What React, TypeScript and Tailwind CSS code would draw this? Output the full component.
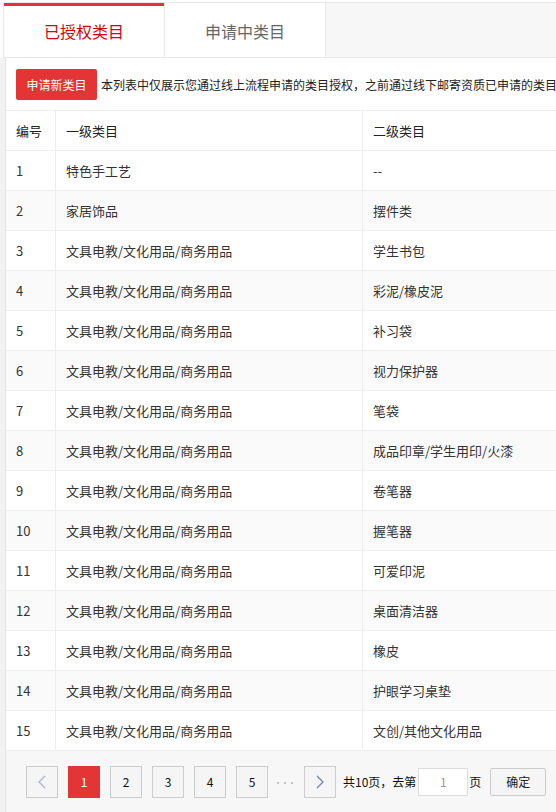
import React from "react";

const rows: [string, string][] = [
  ["特色手工艺", "--"],
  ["家居饰品", "摆件类"],
  ["文具电教/文化用品/商务用品", "学生书包"],
  ["文具电教/文化用品/商务用品", "彩泥/橡皮泥"],
  ["文具电教/文化用品/商务用品", "补习袋"],
  ["文具电教/文化用品/商务用品", "视力保护器"],
  ["文具电教/文化用品/商务用品", "笔袋"],
  ["文具电教/文化用品/商务用品", "成品印章/学生用印/火漆"],
  ["文具电教/文化用品/商务用品", "卷笔器"],
  ["文具电教/文化用品/商务用品", "握笔器"],
  ["文具电教/文化用品/商务用品", "可爱印泥"],
  ["文具电教/文化用品/商务用品", "桌面清洁器"],
  ["文具电教/文化用品/商务用品", "橡皮"],
  ["文具电教/文化用品/商务用品", "护眼学习桌垫"],
  ["文具电教/文化用品/商务用品", "文创/其他文化用品"],
];

function Chevron({ dir, color }: { dir: "left" | "right"; color: string }) {
  return (
    <svg width="8" height="14" viewBox="0 0 8 14" fill="none">
      {dir === "left" ? (
        <polyline points="7,1 1,7 7,13" stroke={color} strokeWidth="1.2" />
      ) : (
        <polyline points="1,1 7,7 1,13" stroke={color} strokeWidth="1.2" />
      )}
    </svg>
  );
}

export default function App() {
  return (
    <div className="h-[812px] w-[556px] overflow-hidden bg-white text-[13px] text-[#333] font-['Microsoft_YaHei','Noto_Sans_CJK_SC',sans-serif]">
      {/* Tabs */}
      <div className="pl-[3px] pt-[2px]">
        <div className="flex h-[56px] border-l border-t border-b border-[#e8e8e8] bg-[#f7f7f7]">
          <div className="flex w-[160px] items-center justify-center border-t-[3px] border-[#e33333] bg-white pb-[2px] text-[16px] text-[#d7000f]">
            已授权类目
          </div>
          <div className="flex w-[162px] items-center justify-center border-l border-r border-[#e8e8e8] bg-white pt-[1px] text-[16px] text-[#666]">
            申请中类目
          </div>
        </div>
      </div>

      {/* Body */}
      <div className="bg-[#f2f2f2] pl-[5px]">
        <div className="overflow-hidden border-l border-[#e4e4e4] bg-white">
          {/* Action row */}
          <div className="flex h-[53px] items-start overflow-hidden whitespace-nowrap border-b border-[#eeeeee] pl-[10px] pt-[11px]">
            <div className="flex h-[31px] w-[81px] shrink-0 items-center justify-center rounded-[2px] bg-[#e33535] text-[12px] text-white">
              申请新类目
            </div>
            <div className="ml-[4px] flex h-[31px] items-center text-[12px] text-[#222]">
              本列表中仅展示您通过线上流程申请的类目授权，之前通过线下邮寄资质已申请的类目
            </div>
          </div>

          {/* Header */}
          <div className="flex h-[40px] w-[700px] border-b border-[#eeeeee] text-[#222]">
            <div className="flex w-[50px] shrink-0 items-center border-r border-[#eeeeee] pl-[10px]">编号</div>
            <div className="flex w-[307px] shrink-0 items-center border-r border-[#eeeeee] pl-[10px]">一级类目</div>
            <div className="flex flex-1 items-center pl-[10px]">二级类目</div>
          </div>

          {/* Rows */}
          {rows.map(([a, b], i) => (
            <div
              key={i}
              className={`flex h-[40px] w-[700px] border-b border-[#eeeeee] ${i % 2 === 1 ? "bg-[#fafafa]" : "bg-white"}`}
            >
              <div className="flex w-[50px] shrink-0 items-center border-r border-[#eeeeee] pl-[10px]">{i + 1}</div>
              <div className="flex w-[307px] shrink-0 items-center border-r border-[#eeeeee] pl-[10px]">{a}</div>
              <div className="flex flex-1 items-center pl-[10px]">{b}</div>
            </div>
          ))}

          {/* Pagination */}
          <div className="flex h-[61px] items-center whitespace-nowrap bg-[#f7f7f7] pl-[20px] text-[12px]">
            <div className="flex h-[32px] w-[32px] items-center justify-center border border-[#cccccc] bg-[#f5f5f5]">
              <Chevron dir="left" color="#a9b2c3" />
            </div>
            <div className="ml-[10px] flex h-[32px] w-[32px] items-center justify-center bg-[#e33535] text-white">1</div>
            {[2, 3, 4, 5].map((n) => (
              <div
                key={n}
                className="ml-[10px] flex h-[32px] w-[32px] items-center justify-center border border-[#cccccc] bg-[#f5f5f5] text-[#111]"
              >
                {n}
              </div>
            ))}
            <div className="ml-[9px] flex w-[16px] items-center justify-between pt-[2px]">
              <span className="h-[2px] w-[2px] rounded-full bg-[#b5b5b5]" />
              <span className="h-[2px] w-[2px] rounded-full bg-[#b5b5b5]" />
              <span className="h-[2px] w-[2px] rounded-full bg-[#b5b5b5]" />
            </div>
            <div className="ml-[11px] flex h-[32px] w-[32px] items-center justify-center border border-[#cccccc] bg-[#f5f5f5]">
              <Chevron dir="right" color="#6f80a0" />
            </div>
            <span className="ml-[7px] text-[#111]">共10页，去第</span>
            <div className="ml-[2px] flex h-[28px] w-[50px] items-center justify-center border border-[#dddddd] bg-white text-[#999]">
              1
            </div>
            <span className="ml-[1px] text-[#111]">页</span>
            <div className="ml-[9px] flex h-[28px] w-[56px] items-center justify-center rounded-[2px] border border-[#cccccc] bg-[#f5f5f5] text-[#222]">
              确定
            </div>
          </div>
        </div>
      </div>
    </div>
  );
}
